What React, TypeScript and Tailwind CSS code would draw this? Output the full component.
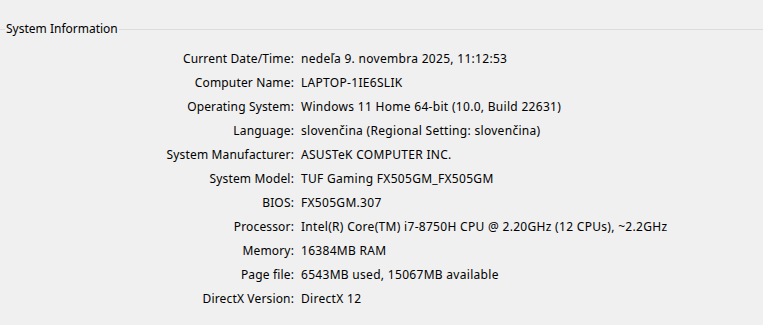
const rows: [string, string][] = [
  ["Current Date/Time", "nedeľa 9. novembra 2025, 11:12:53"],
  ["Computer Name", "LAPTOP-1IE6SLIK"],
  ["Operating System", "Windows 11 Home 64-bit (10.0, Build 22631)"],
  ["Language", "slovenčina (Regional Setting: slovenčina)"],
  ["System Manufacturer", "ASUSTeK COMPUTER INC."],
  ["System Model", "TUF Gaming FX505GM_FX505GM"],
  ["BIOS", "FX505GM.307"],
  ["Processor", "Intel(R) Core(TM) i7-8750H CPU @ 2.20GHz (12 CPUs), ~2.2GHz"],
  ["Memory", "16384MB RAM"],
  ["Page file", "6543MB used, 15067MB available"],
  ["DirectX Version", "DirectX 12"],
];

export default function App() {
  return (
    <div
      className="h-[325px] w-[763px] overflow-hidden bg-[#f0f0f0] text-[12px] text-black"
      style={{ fontFamily: '"Noto Sans", "Open Sans", sans-serif' }}
    >
      <div className="box-content flex h-4 items-center pt-[21px]">
        <div className="h-px w-[5px] bg-[#dcdcdc]" />
        <span className="px-[1px] leading-4">System Information</span>
        <div className="h-px flex-1 bg-[#dcdcdc]" />
      </div>
      <div className="mt-[10px] grid grid-cols-[294px_1fr] gap-x-[7px]">
        {rows.map(([label, value]) => (
          <div key={label} className="contents">
            <div className="h-6 text-right leading-6 tracking-[0.15px]">{label}:</div>
            <div className="h-6 leading-6 tracking-[0.3px]">{value}</div>
          </div>
        ))}
      </div>
    </div>
  );
}
